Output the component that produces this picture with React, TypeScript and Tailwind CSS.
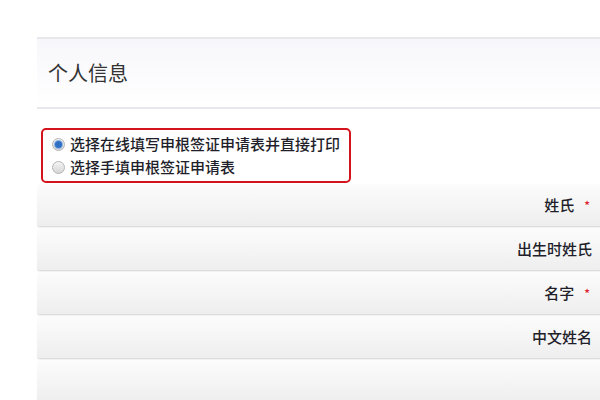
import React from 'react';

const rows = [
  { label: '姓氏', required: true },
  { label: '出生时姓氏', required: false },
  { label: '名字', required: true },
  { label: '中文姓名', required: false },
  { label: '', required: false },
];

const Radio: React.FC<{ checked?: boolean }> = ({ checked }) => (
  <span className="w-[13px] h-[13px] rounded-full border border-[#b5b5b5] bg-gradient-to-b from-[#f4f4f4] to-[#d6d6d6] flex items-center justify-center shrink-0">
    {checked && <span className="w-[7px] h-[7px] rounded-full bg-[#2f6fc4] shadow-[0_0_0_1px_#8fb4e6]" />}
  </span>
);

export default function App() {
  return (
    <div className="w-[600px] h-[400px] bg-white overflow-hidden pt-[37px] pl-[37px] font-['Noto_Sans_CJK_SC','Noto_Sans',sans-serif] text-[#1f1f2b]">
      {/* header */}
      <div className="h-[72px] border-t-2 border-b-2 border-[#e8e8ec] bg-gradient-to-b from-[#f7f7fb] to-white flex items-center pl-[11px]">
        <h2 className="text-[20px] text-[#333] leading-none">个人信息</h2>
      </div>

      {/* options */}
      <div className="pt-[19px] pb-[1px] pl-[4px]">
        <div className="w-[310px] h-[55px] border-2 border-[#d4141c] rounded-[5px] flex flex-col justify-center gap-[3px] pl-[9px]">
          <label className="flex items-center gap-[5px] text-[15px] leading-[20px] font-medium">
            <Radio checked />
            选择在线填写申根签证申请表并直接打印
          </label>
          <label className="flex items-center gap-[5px] text-[15px] leading-[20px] font-medium">
            <Radio />
            选择手填申根签证申请表
          </label>
        </div>
      </div>

      {/* form rows */}
      <div className="flex flex-col gap-[1px]">
        {rows.map((r, i) => (
          <div
            key={i}
            className="h-[43px] rounded-l-[3px] bg-gradient-to-b from-[#fcfcfc] to-[#eeeeee] border-b border-[#dedede] shadow-[0_1px_1px_rgba(0,0,0,0.06)] flex items-center justify-end pr-[8px] text-[15px] font-medium"
          >
            {r.label}
            {r.required && <span className="text-[#e0242c] text-[12px] ml-[10px] mr-[2px]">*</span>}
          </div>
        ))}
      </div>
    </div>
  );
}
